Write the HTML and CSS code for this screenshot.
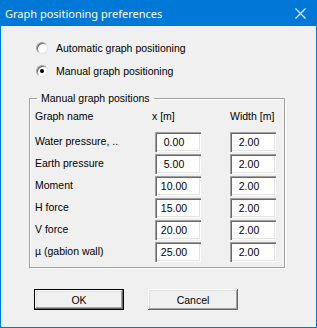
FILE: index.html
```html
<!DOCTYPE html>
<html lang="en">
<head>
    <meta charset="UTF-8">
    <title>Graph positioning preferences</title>
    <link rel="stylesheet" href="styles.css">
</head>
<body>
    <div class="window">
        <div class="titlebar">
            <span class="title">Graph positioning preferences</span>
            <svg class="close" width="11" height="11" viewBox="0 0 11 11">
                <path d="M0.5 0.5 L10.5 10.5 M10.5 0.5 L0.5 10.5" stroke="#fff" stroke-width="1.1" fill="none"/>
            </svg>
        </div>

        <div class="options">
            <label class="radio"><span class="dot"></span>Automatic graph positioning</label>
            <label class="radio checked"><span class="dot"></span>Manual graph positioning</label>
        </div>

        <fieldset class="group">
            <legend>Manual graph positions</legend>
            <div class="grid">
                <div class="head">Graph name</div>
                <div class="head head-x">x [m]</div>
                <div class="head">Width [m]</div>

                <div class="name">Water pressure, ..</div>
                <input class="field" type="text" value="0.00">
                <input class="field" type="text" value="2.00">

                <div class="name">Earth pressure</div>
                <input class="field" type="text" value="5.00">
                <input class="field" type="text" value="2.00">

                <div class="name">Moment</div>
                <input class="field" type="text" value="10.00">
                <input class="field" type="text" value="2.00">

                <div class="name">H force</div>
                <input class="field" type="text" value="15.00">
                <input class="field" type="text" value="2.00">

                <div class="name">V force</div>
                <input class="field" type="text" value="20.00">
                <input class="field" type="text" value="2.00">

                <div class="name">µ (gabion wall)</div>
                <input class="field" type="text" value="25.00">
                <input class="field" type="text" value="2.00">
            </div>
        </fieldset>

        <div class="buttons">
            <button class="btn default">OK</button>
            <button class="btn">Cancel</button>
        </div>
    </div>
</body>
</html>
```

FILE: styles.css
```css
body {
    margin: 0;
    font-family: "Liberation Sans", Arial, sans-serif;
    font-size: 10.5px;
    color: #000;
}

.window {
    width: 317px;
    height: 328px;
    box-sizing: border-box;
    border: 1px solid #0078d7;
    border-top: 0;
    background: #f0f0f0;
    display: flex;
    flex-direction: column;
}

.titlebar {
    height: 26px;
    flex: none;
    background: #0078d7;
    color: #fff;
    display: flex;
    align-items: center;
    justify-content: space-between;
    padding: 0 10px 0 4px;
}

.title {
    font-family: "Noto Sans", "Open Sans", sans-serif;
    font-size: 11px;
}

.close {
    display: block;
    margin-top: 1px;
}

/* radio buttons */
.options {
    padding: 10px 0 0 35px;
}

.radio {
    height: 23px;
    display: flex;
    align-items: center;
    gap: 8px;
}

.dot {
    width: 12px;
    height: 12px;
    box-sizing: border-box;
    border-radius: 50%;
    background: #fff;
    border: 1px solid;
    border-color: #a0a0a0 #e3e3e3 #e3e3e3 #a0a0a0;
    box-shadow: inset 1px 1px 0 #696969;
    position: relative;
}

.checked .dot::after {
    content: '';
    position: absolute;
    left: 3px;
    top: 3px;
    width: 4px;
    height: 4px;
    border-radius: 50%;
    background: #000;
}

/* group box */
.group {
    margin: 10px 0 0 28px;
    width: 256px;
    box-sizing: border-box;
    padding: 5px 0 5px 5px;
    border: 1px solid #a0a0a0;
    box-shadow: inset 1px 1px 0 #fff, 1px 1px 0 #fff;
    min-width: 0;
}

.group legend {
    margin-left: 2px;
    padding: 0 4px;
    line-height: 13px;
}

.grid {
    display: grid;
    grid-template-columns: 120px 75px 46px;
    grid-auto-rows: 20px;
    row-gap: 2px;
    align-items: center;
}

.head {
    align-self: start;
    line-height: 13px;
    white-space: nowrap;
}

.head-x {
    margin-left: -3px;
}

.name {
    line-height: 13px;
    margin-top: -1px;
    white-space: nowrap;
}

.field {
    width: 46px;
    height: 20px;
    box-sizing: border-box;
    margin: 0;
    border: 0;
    padding: 0 8px 0 0;
    background: #fff;
    font: inherit;
    text-align: center;
    color: #000;
    box-shadow: inset 1px 1px 0 #a0a0a0, inset 2px 2px 0 #696969,
                inset -1px -1px 0 #fff, inset -2px -2px 0 #e3e3e3;
    outline: none;
}

/* buttons */
.buttons {
    display: flex;
    gap: 24px;
    margin: 21px 0 0 33px;
}

.btn {
    width: 90px;
    height: 21px;
    box-sizing: border-box;
    border: 0;
    padding: 0;
    background: #f0f0f0;
    font: inherit;
    color: #000;
    box-shadow: inset -1px -1px 0 #696969, inset 1px 1px 0 #fff,
                inset -2px -2px 0 #a0a0a0, inset 2px 2px 0 #e3e3e3;
}

.btn.default {
    border: 1px solid #000;
}
```
